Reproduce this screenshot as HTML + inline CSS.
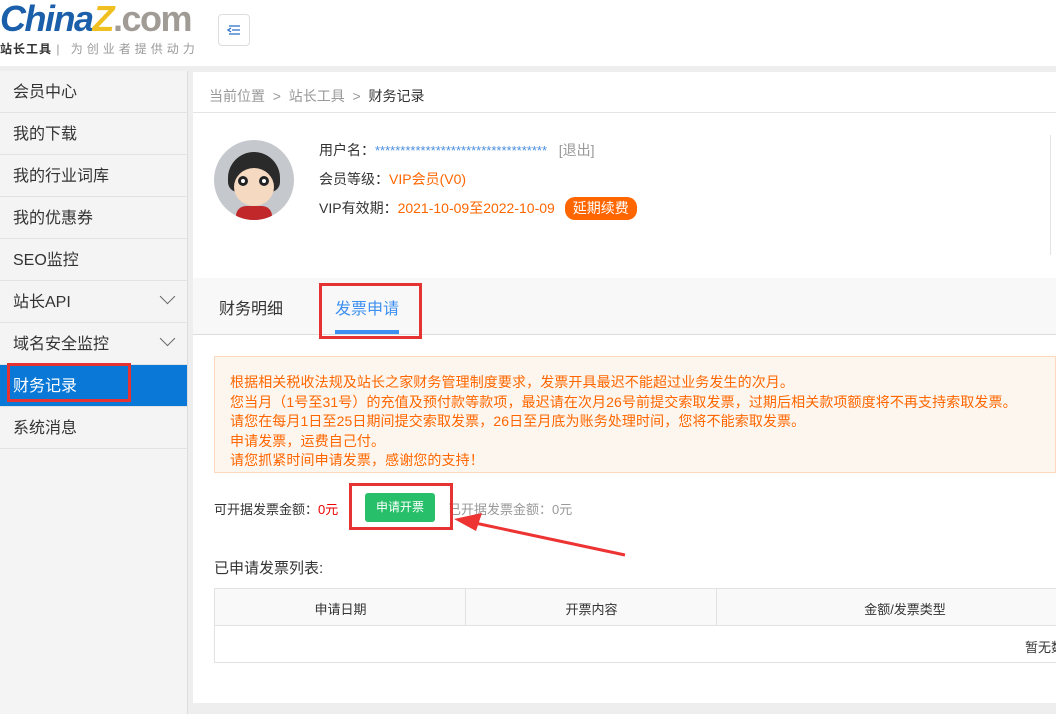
<!DOCTYPE html>
<html><head><meta charset="utf-8"><style>
*{margin:0;padding:0;box-sizing:border-box}
body{width:1056px;height:714px;overflow:hidden;background:#eee;font-family:"Liberation Sans","Noto Sans CJK SC",sans-serif;position:relative;color:#333}
.abs{position:absolute}
.hdr{left:0;top:0;width:1056px;height:66px;background:#fff}
.side{left:0;top:71px;width:188px;height:643px;background:#f4f4f4;border-right:1px solid #ddd}
.side div{height:42px;line-height:44px;padding-left:13px;font-size:16px;color:#333;border-bottom:1px solid #e2e2e2;position:relative}
.side .act{background:#0a78d7;color:#fff}
.chev{position:absolute;right:14px;top:10px;width:11px;height:11px;border-right:1.5px solid #666;border-bottom:1.5px solid #666;transform:rotate(45deg)}
.main{left:193px;top:72px;width:863px;height:631px;background:#fff}
</style></head><body>
<div class="abs hdr"></div>
<div class="abs" style="left:0;top:-2px;font:italic bold 36px 'Liberation Sans',sans-serif;color:#1b5fab;letter-spacing:-1.5px">China<span style="color:#f0c020">Z</span><span style="color:#a09b95;font-style:normal;font-weight:bold">.com</span></div>
<div class="abs" style="left:0;top:40px;font-size:12px;color:#333;letter-spacing:1px"><b>站长工具</b> <span style="color:#999;letter-spacing:4px">| 为创业者提供动力</span></div>
<div class="abs" style="left:218px;top:14px;width:32px;height:32px;border:1px solid #ddd;border-radius:4px;background:#fff"><svg width="30" height="30" viewBox="0 0 30 30"><path d="M10 11h11M13 15h8M10 19h11M12 13l-3 2 3 2" stroke="#2b6fc8" stroke-width="1.3" fill="none"/></svg></div>
<div class="abs side">
<div>会员中心</div><div>我的下载</div><div>我的行业词库</div><div>我的优惠券</div><div>SEO监控</div>
<div>站长API<span class="chev"></span></div><div>域名安全监控<span class="chev"></span></div>
<div class="act">财务记录</div><div>系统消息</div>
</div>
<div class="abs" style="left:7px;top:363px;width:124px;height:39px;border:3px solid #e53333"></div>
<div class="abs main"></div>
<div class="abs" style="left:193px;top:112px;width:863px;height:1px;background:#e4e4e4"></div>
<div class="abs" style="left:209px;top:86px;font-size:14px;color:#999">当前位置 &nbsp;&gt;&nbsp; 站长工具 &nbsp;&gt;&nbsp; <span style="color:#333">财务记录</span></div>
<div class="abs" style="left:214px;top:140px;width:80px;height:80px;border-radius:50%;background:#c5c8cc;overflow:hidden">
<div class="abs" style="left:14px;top:12px;width:52px;height:40px;border-radius:26px 26px 10px 10px;background:#2a2a2a"></div>
<div class="abs" style="left:20px;top:28px;width:40px;height:38px;border-radius:50%;background:#f5d9c0"></div>
<div class="abs" style="left:24px;top:36px;width:10px;height:10px;border-radius:50%;background:#fff;box-shadow:inset 0 0 0 3px #222"></div>
<div class="abs" style="left:45px;top:36px;width:10px;height:10px;border-radius:50%;background:#fff;box-shadow:inset 0 0 0 3px #222"></div>
<div class="abs" style="left:22px;top:66px;width:36px;height:20px;border-radius:10px 10px 0 0;background:#c0282a"></div>
</div>
<div class="abs" style="left:319px;top:136px;font-size:14px;line-height:29px;color:#333">
<div>用户名：<span style="color:#4a8fe0;font-size:13px">**********************************</span> &nbsp; <span style="color:#999">[退出]</span></div>
<div>会员等级：<span style="color:#f60">VIP会员(V0)</span></div>
<div>VIP有效期：<span style="color:#f60">2021-10-09至2022-10-09</span> <span style="display:inline-block;background:#f60;color:#fff;border-radius:10px;padding:0 8px;line-height:23px;margin-left:6px">延期续费</span></div>
</div>
<div class="abs" style="left:1050px;top:135px;width:1px;height:120px;background:#e4e4e4"></div>
<div class="abs" style="left:193px;top:278px;width:863px;height:57px;background:#f8f8f8;border-bottom:1px solid #ddd"></div>
<div class="abs" style="left:219px;top:295px;font-size:16px;color:#333">财务明细</div>
<div class="abs" style="left:335px;top:295px;font-size:16px;color:#3d8ff0">发票申请</div>
<div class="abs" style="left:335px;top:330px;width:64px;height:4px;background:#3d8ff0"></div>
<div class="abs" style="left:319px;top:283px;width:103px;height:56px;border:3px solid #e53333"></div>
<div class="abs" style="left:214px;top:356px;width:842px;height:117px;background:#fdf6ee;border:1px solid #fcd9bd"></div>
<div class="abs" style="left:230px;top:373px;font-size:14px;line-height:19.5px;color:#f60;white-space:nowrap;letter-spacing:0.1px">
根据相关税收法规及站长之家财务管理制度要求，发票开具最迟不能超过业务发生的次月。<br>
您当月（1号至31号）的充值及预付款等款项，最迟请在次月26号前提交索取发票，过期后相关款项额度将不再支持索取发票。<br>
请您在每月1日至25日期间提交索取发票，26日至月底为账务处理时间，您将不能索取发票。<br>
申请发票，运费自己付。<br>请您抓紧时间申请发票，感谢您的支持！</div>
<div class="abs" style="left:214px;top:499px;font-size:13px;color:#333">可开据发票金额：<span style="color:#e00">0元</span></div>
<div class="abs" style="left:365px;top:493px;width:70px;height:29px;background:#27bf6a;border-radius:3px;color:#fff;font-size:12px;text-align:center;line-height:29px">申请开票</div>
<div class="abs" style="left:448px;top:499px;font-size:13px;color:#999">已开据发票金额：0元</div>
<div class="abs" style="left:349px;top:483px;width:104px;height:47px;border:3px solid #e53333"></div>
<svg class="abs" style="left:450px;top:505px" width="180" height="55"><path d="M175 50 L25 18" stroke="#ee3333" stroke-width="3"/><path d="M4 14 L32 8 L26 26 Z" fill="#ee3333"/></svg>
<div class="abs" style="left:214px;top:557px;font-size:15px;color:#333">已申请发票列表:</div>
<div class="abs" style="left:214px;top:588px;width:860px;height:75px;border:1px solid #e2e2e2;font-size:13px;color:#333">
<div class="abs" style="left:0;top:0;width:860px;height:37px;background:#f9f9f9;border-bottom:1px solid #e2e2e2"></div>
<div class="abs" style="left:250px;top:0;width:1px;height:37px;background:#e2e2e2"></div>
<div class="abs" style="left:501px;top:0;width:1px;height:37px;background:#e2e2e2"></div>
<div class="abs" style="left:0;top:10px;width:251px;text-align:center">申请日期</div>
<div class="abs" style="left:251px;top:10px;width:251px;text-align:center">开票内容</div>
<div class="abs" style="left:630px;top:10px;width:120px;text-align:center">金额/发票类型</div>
<div class="abs" style="left:810px;top:48px;white-space:nowrap">暂无数据</div>
</div>
</body></html>
